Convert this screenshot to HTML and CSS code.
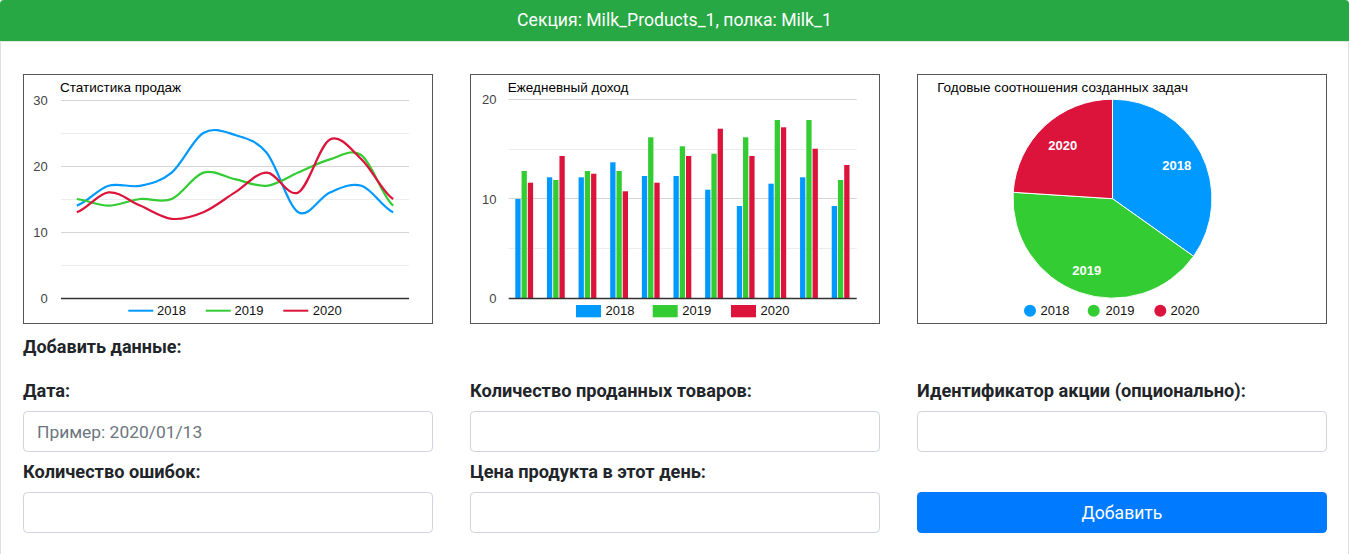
FILE: index.html
```html
<!DOCTYPE html>
<html lang="ru">
<head>
<meta charset="utf-8">
<title>Milk_1</title>
<link rel="stylesheet" href="styles.css">
</head>
<body>
<div class="card">
  <div class="card-header">Секция: Milk_Products_1, полка: Milk_1</div>
  <div class="card-body">
    <div class="charts">
      <div class="chart">
        <svg class="chart-svg" width="408" height="248" viewBox="0 0 408 248">
          <text x="36" y="16.8" class="ct">Статистика продаж</text>
          <line x1="37" x2="385" y1="25.5" y2="25.5" class="gmaj"/>
          <line x1="37" x2="385" y1="58.5" y2="58.5" class="gmin"/>
          <line x1="37" x2="385" y1="91.5" y2="91.5" class="gmaj"/>
          <line x1="37" x2="385" y1="124.5" y2="124.5" class="gmin"/>
          <line x1="37" x2="385" y1="157.5" y2="157.5" class="gmaj"/>
          <line x1="37" x2="385" y1="190.5" y2="190.5" class="gmin"/>
          <text x="23.8" y="30.2" class="ax">30</text>
          <text x="23.8" y="96.2" class="ax">20</text>
          <text x="23.8" y="162.2" class="ax">10</text>
          <text x="23.8" y="228.2" class="ax">0</text>
          <path class="ln c18" data-values="14,17,17,19,25,24.7,22,13,16,17,13"/>
          <path class="ln c19" data-values="15,14,15,15,19,18,17,19,21,21.6,14"/>
          <path class="ln c20" data-values="13,16,14,12,13,16,19,16,24,21,15"/>
          <line x1="37" x2="385" y1="223.5" y2="223.5" class="base"/>
          <line x1="104.3" x2="129.3" y1="235.7" y2="235.7" class="lgl c18"/>
          <text x="133" y="240.4" class="lg">2018</text>
          <line x1="181.7" x2="206.7" y1="235.7" y2="235.7" class="lgl c19"/>
          <text x="210.5" y="240.4" class="lg">2019</text>
          <line x1="259.3" x2="284.3" y1="235.7" y2="235.7" class="lgl c20"/>
          <text x="288.8" y="240.4" class="lg">2020</text>
        </svg>
      </div>
      <div class="chart">
        <svg class="chart-svg" width="408" height="248" viewBox="0 0 408 248">
          <text x="36.8" y="16.8" class="ct">Ежедневный доход</text>
          <line x1="37.7" x2="385.7" y1="24.5" y2="24.5" class="gmaj"/>
          <line x1="37.7" x2="385.7" y1="74.5" y2="74.5" class="gmin"/>
          <line x1="37.7" x2="385.7" y1="123.5" y2="123.5" class="gmaj"/>
          <line x1="37.7" x2="385.7" y1="173.5" y2="173.5" class="gmin"/>
          <text x="25.5" y="29" class="ax">20</text>
          <text x="25.5" y="129" class="ax">10</text>
          <text x="25.5" y="228" class="ax">0</text>
          <g class="f18">
            <rect x="44.3" y="124" width="5.3" height="99"/>
            <rect x="75.94" y="102.3" width="5.3" height="120.7"/>
            <rect x="107.58" y="102.3" width="5.3" height="120.7"/>
            <rect x="139.22" y="87.3" width="5.3" height="135.7"/>
            <rect x="170.86" y="101" width="5.3" height="122"/>
            <rect x="202.5" y="101" width="5.3" height="122"/>
            <rect x="234.14" y="114.7" width="5.3" height="108.3"/>
            <rect x="265.78" y="131" width="5.3" height="92"/>
            <rect x="297.42" y="108.7" width="5.3" height="114.3"/>
            <rect x="329.06" y="102.3" width="5.3" height="120.7"/>
            <rect x="360.7" y="131" width="5.3" height="92"/>
          </g>
          <g class="f19">
            <rect x="50.55" y="96" width="5.3" height="127"/>
            <rect x="82.19" y="105" width="5.3" height="118"/>
            <rect x="113.83" y="96" width="5.3" height="127"/>
            <rect x="145.47" y="96" width="5.3" height="127"/>
            <rect x="177.11" y="62.3" width="5.3" height="160.7"/>
            <rect x="208.75" y="71.3" width="5.3" height="151.7"/>
            <rect x="240.39" y="78.7" width="5.3" height="144.3"/>
            <rect x="272.03" y="62.3" width="5.3" height="160.7"/>
            <rect x="303.67" y="45" width="5.3" height="178"/>
            <rect x="335.31" y="45" width="5.3" height="178"/>
            <rect x="366.95" y="105" width="5.3" height="118"/>
          </g>
          <g class="f20">
            <rect x="56.8" y="107.7" width="5.3" height="115.3"/>
            <rect x="88.44" y="81" width="5.3" height="142"/>
            <rect x="120.08" y="98.7" width="5.3" height="124.3"/>
            <rect x="151.72" y="116.3" width="5.3" height="106.7"/>
            <rect x="183.36" y="107.7" width="5.3" height="115.3"/>
            <rect x="215" y="81" width="5.3" height="142"/>
            <rect x="246.64" y="53.7" width="5.3" height="169.3"/>
            <rect x="278.28" y="81" width="5.3" height="142"/>
            <rect x="309.92" y="52.3" width="5.3" height="170.7"/>
            <rect x="341.56" y="73.7" width="5.3" height="149.3"/>
            <rect x="373.2" y="90" width="5.3" height="133"/>
          </g>
          <line x1="37.7" x2="385.7" y1="223.5" y2="223.5" class="base"/>
          <rect x="105" y="230" width="25" height="12.3" class="f18"/>
          <text x="134.5" y="240.4" class="lg">2018</text>
          <rect x="181.7" y="230" width="25" height="12.3" class="f19"/>
          <text x="211.2" y="240.4" class="lg">2019</text>
          <rect x="260" y="230" width="25" height="12.3" class="f20"/>
          <text x="289.5" y="240.4" class="lg">2020</text>
        </svg>
      </div>
      <div class="chart">
        <svg class="chart-svg" width="408" height="248" viewBox="0 0 408 248">
          <text x="19.2" y="16.8" class="ct">Годовые соотношения созданных задач</text>
          <path class="f18 slice" d="M194.5,123.7 L194.5,24.2 A99.5,99.5 0 0 1 275.6,181.3 Z"/>
          <path class="f19 slice" d="M194.5,123.7 L275.6,181.3 A99.5,99.5 0 0 1 95.2,117.3 Z"/>
          <path class="f20 slice" d="M194.5,123.7 L95.2,117.3 A99.5,99.5 0 0 1 194.5,24.2 Z"/>
          <text x="258.7" y="95.4" class="pl">2018</text>
          <text x="168.7" y="199.6" class="pl">2019</text>
          <text x="144.7" y="74.6" class="pl">2020</text>
          <circle cx="112" cy="235.7" r="6" class="f18"/>
          <text x="122.5" y="240.4" class="lg">2018</text>
          <circle cx="175.7" cy="235.7" r="6" class="f19"/>
          <text x="187.5" y="240.4" class="lg">2019</text>
          <circle cx="242.3" cy="235.7" r="6" class="f20"/>
          <text x="252.5" y="240.4" class="lg">2020</text>
        </svg>
      </div>
    </div>
    <div class="form-title">Добавить данные:</div>
    <form class="form-grid">
      <div class="field">
        <label class="label">Дата:</label>
        <input class="input" type="text" placeholder="Пример: 2020/01/13">
      </div>
      <div class="field">
        <label class="label">Количество проданных товаров:</label>
        <input class="input" type="text">
      </div>
      <div class="field">
        <label class="label">Идентификатор акции (опционально):</label>
        <input class="input" type="text">
      </div>
      <div class="field">
        <label class="label">Количество ошибок:</label>
        <input class="input" type="text">
      </div>
      <div class="field">
        <label class="label">Цена продукта в этот день:</label>
        <input class="input" type="text">
      </div>
      <button type="button" class="btn">Добавить</button>
    </form>
  </div>
</div>
<script src="script.js"></script>
</body>
</html>
```

FILE: styles.css
```css
* {
  box-sizing: border-box;
}

body {
  margin: 0;
  font-family: Roboto, "Noto Sans", sans-serif;
  color: #212529;
  background: #fff;
}

.card {
  width: 1349px;
  border: 1px solid #dfdfdf;
  border-radius: 4px;
}

.card-header {
  margin: -1px -1px 0;
  height: 42px;
  line-height: 41px;
  background: #28a745;
  color: #fff;
  text-align: center;
  font-size: 17.6px;
  border-radius: 4px 4px 0 0;
  border-bottom: 1px solid #e4e4e4;
}

.card-body {
  padding: 32px 22px 24px;
}

.charts {
  display: grid;
  grid-template-columns: repeat(3, 410px);
  column-gap: 37px;
}

.chart {
  height: 250px;
  border: 1px solid #555;
  background: #fff;
}

.chart-svg {
  display: block;
}

.ct {
  font: 13.5px "Liberation Sans", Arial, sans-serif;
  fill: #000;
}

.ax {
  font: 13px "Liberation Sans", Arial, sans-serif;
  fill: #444;
  text-anchor: end;
}

.lg {
  font: 13px "Liberation Sans", Arial, sans-serif;
  fill: #111;
}

.pl {
  font: bold 13px "Liberation Sans", Arial, sans-serif;
  fill: #fff;
  text-anchor: middle;
}

.gmaj {
  stroke: #d4d4d4;
  stroke-width: 1;
}

.gmin {
  stroke: #ececec;
  stroke-width: 1;
}

.base {
  stroke: #333;
  stroke-width: 1.4;
}

.ln {
  fill: none;
  stroke-width: 2.2;
}

.lgl {
  stroke-width: 2;
}

.c18 { stroke: #0099ff; }
.c19 { stroke: #33cc33; }
.c20 { stroke: #dc143c; }

.f18 { fill: #0099ff; }
.f19 { fill: #33cc33; }
.f20 { fill: #dc143c; }

.slice {
  stroke: #fff;
  stroke-width: 1;
}

.form-title {
  margin-top: 11px;
  font-size: 18px;
  font-weight: 700;
  line-height: 24px;
}

.form-grid {
  margin-top: 20px;
  display: grid;
  grid-template-columns: repeat(3, 410px);
  column-gap: 37px;
  row-gap: 8px;
}

.field {
  display: flex;
  flex-direction: column;
}

.label {
  font-size: 18.2px;
  font-weight: 700;
  line-height: 24px;
  margin-bottom: 8px;
}

.input {
  height: 41px;
  border: 1px solid #ced4da;
  border-radius: 4.4px;
  padding: 0 13px;
  font-family: Roboto, "Noto Sans", sans-serif;
  font-size: 17.4px;
  color: #495057;
  background: #fff;
}

.input::placeholder {
  color: #6c757d;
}

.btn {
  align-self: end;
  height: 41px;
  border: none;
  border-radius: 4.4px;
  background: #007bff;
  color: #fff;
  font-family: Roboto, "Noto Sans", sans-serif;
  font-size: 17.6px;
}
```

FILE: script.js
```js
document.querySelectorAll('path[data-values]').forEach(function (p) {
  var vals = p.getAttribute('data-values').split(',').map(Number);
  var x0 = 52.8, dx = 31.64, base = 223, k = 6.6;
  var pts = vals.map(function (v, i) { return [x0 + dx * i, base - k * v]; });
  var d = 'M' + pts[0][0].toFixed(2) + ',' + pts[0][1].toFixed(2);
  for (var i = 0; i < pts.length - 1; i++) {
    var a = pts[i - 1] || pts[i], b = pts[i], c = pts[i + 1], e = pts[i + 2] || pts[i + 1];
    var c1x = b[0] + dx / 3, c1y = b[1] + (c[1] - a[1]) / 6;
    var c2x = c[0] - dx / 3, c2y = c[1] - (e[1] - b[1]) / 6;
    d += ' C' + c1x.toFixed(2) + ',' + c1y.toFixed(2) + ' ' + c2x.toFixed(2) + ',' + c2y.toFixed(2) + ' ' + c[0].toFixed(2) + ',' + c[1].toFixed(2);
  }
  p.setAttribute('d', d);
});
```
